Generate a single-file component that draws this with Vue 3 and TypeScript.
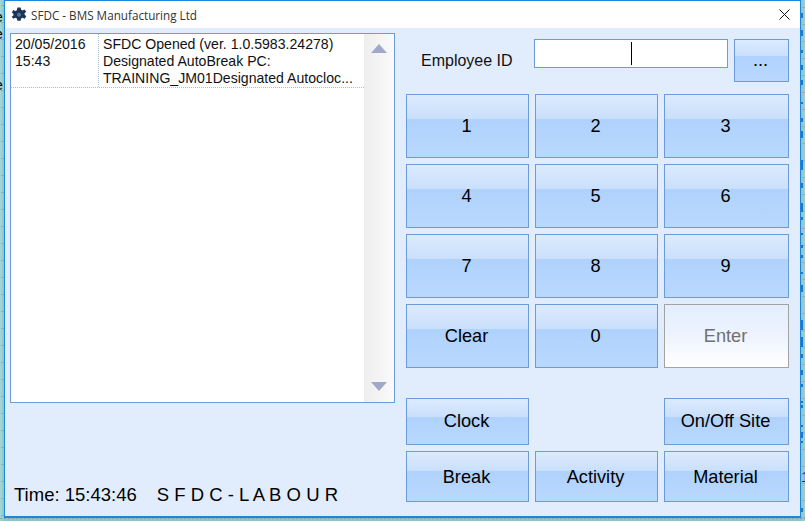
<script setup lang="ts">
interface Mark { top: number; height: number; strong?: boolean }
const marks: Mark[] = [
  [13,5],[30,6],[50,3],[65,5],[80,5],[102,2],[118,4],[131,7],[160,10],[183,5],[203,9],[217,3],[233,2],[245,3],[255,3],
  [272,2],[285,7],[320,10],[337,10],[354,4],[370,5],[384,3],[401,2],[405,3],[425,2],[432,6],[441,2],[508,4],
].map(([top, height]) => ({ top, height }))
const keys = ['1', '2', '3', '4', '5', '6', '7', '8', '9', 'Clear', '0']
</script>

<template>
  <div class="desktop">
    <span class="peek p1">e</span>
    <span class="peek p2">e</span>
    <span class="peek p3">e</span>
    <i v-for="m in marks" :key="m.top" class="mark" :style="{ top: m.top + 'px', height: m.height + 'px' }"></i>
    <span class="peek-one">1</span>

    <div class="window">
      <header class="titlebar">
        <svg class="logo" width="16" height="16" viewBox="0 0 16 16">
          <path fill="#1b3558" d="M6.4 0.6h3.2l.5 2.1 1.5.7 2-1 1.6 2.4-1.6 1.4v1.6l1.7 1.4-1.7 2.5-2-.9-1.5.7-.5 2.2H6.4l-.5-2.2-1.5-.7-2 .9L.7 9.8l1.7-1.4V6.8L.8 5.4l1.6-2.4 2 1 1.5-.7z" />
          <circle cx="8" cy="7.7" r="2" fill="#5a7596" />
        </svg>
        <span class="title">SFDC - BMS Manufacturing Ltd</span>
        <svg class="close" width="11" height="11" viewBox="0 0 11 11">
          <path d="M0.5 0.5l10 10M10.5 0.5l-10 10" stroke="#111" stroke-width="1" fill="none" />
        </svg>
      </header>

      <div class="body">
        <section class="left">
          <div class="log">
            <div class="entries">
              <div class="entry">
                <div class="when">20/05/2016<br />15:43</div>
                <div class="what">SFDC Opened (ver. 1.0.5983.24278)<br />Designated AutoBreak PC:<br />TRAINING_JM01Designated Autocloc...</div>
              </div>
            </div>
            <div class="scroll">
              <span class="arrow up"></span>
              <span class="arrow down"></span>
            </div>
          </div>
          <div class="status">
            <span>Time: 15:43:46</span>
            <span class="module">S F D C - L A B O U R</span>
          </div>
        </section>

        <section class="right">
          <div class="idrow">
            <label class="idlabel">Employee ID</label>
            <div class="idinput"><span class="caret"></span></div>
            <button class="btn more">...</button>
          </div>

          <div class="keypad">
            <button v-for="k in keys" :key="k" class="btn">{{ k }}</button>
            <button class="btn enter">Enter</button>
          </div>

          <div class="actions">
            <button class="btn">Clock</button>
            <span></span>
            <button class="btn">On/Off Site</button>
            <button class="btn">Break</button>
            <button class="btn">Activity</button>
            <button class="btn">Material</button>
          </div>
        </section>
      </div>
    </div>
  </div>
</template>

<style>
html, body { margin: 0; padding: 0; overflow: hidden; }
</style>

<style scoped>
.desktop {
  position: relative;
  width: 805px;
  height: 521px;
  box-sizing: border-box;
  padding: 0 4px 3px 4px;
  overflow: hidden;
  background-color: #93cac9;
  background-image:
    repeating-linear-gradient(180deg, #9aa9b8 0 1px, transparent 1px 17px),
    repeating-linear-gradient(180deg, #9aa9b8 0 1px, transparent 1px 17px),
    repeating-linear-gradient(90deg, #8f9fb4 0 2px, transparent 2px 4px),
    linear-gradient(90deg, #a6d8d8 0, #8fc6c5 4px, #8fc6c5 801px, #9ccfce 805px);
  background-size: 3px 100%, 3px 100%, 100% 1px, 100% 100%;
  background-position: 1px 5px, 802px 7px, 0 518px, 0 0;
  background-repeat: no-repeat;
  font-family: "Liberation Sans", Arial, sans-serif;
  color: #000;
}
.peek { position: absolute; left: -5px; font-size: 14px; line-height: 16px; }
.p1 { top: 9px; }
.p2 { top: 26px; }
.p3 { top: 77px; }
.mark { position: absolute; left: 801px; width: 2px; background: #1a78cf; }
.peek-one { position: absolute; left: 801px; top: 469px; font-size: 15px; line-height: 15px; color: #1414d8; width: 4px; overflow: hidden; }

.window {
  position: relative;
  box-sizing: border-box;
  height: 518px;
  border: 1px solid #1a86dc;
  border-width: 1px 1px 2px 1px;
  background: #e1edfd;
  display: flex;
  flex-direction: column;
}
.titlebar {
  height: 27px;
  flex: none;
  background: #fff;
  display: flex;
  align-items: center;
  padding: 0 10px 0 6px;
}
.logo { flex: none; }
.title {
  margin-left: 4px;
  font-family: "Open Sans", "Noto Sans", sans-serif;
  font-size: 11.7px;
  color: #333;
  white-space: nowrap;
}
.close { margin-left: auto; }

.body {
  flex: 1;
  display: flex;
  padding: 5px 0 0 5px;
  gap: 11px;
}
.left {
  width: 385px;
  flex: none;
  display: flex;
  flex-direction: column;
}
.log {
  box-sizing: border-box;
  height: 370px;
  background: #fff;
  border: 1px solid #6b9bd8;
  display: flex;
}
.entries { flex: 1; }
.entry {
  display: flex;
  height: 54px;
  box-sizing: border-box;
  border-bottom: 1px dotted #a9bdd3;
  font-size: 14.1px;
  line-height: 17px;
}
.when {
  box-sizing: border-box;
  width: 88px;
  padding: 2px 0 0 4px;
  border-right: 1px dotted #a9bdd3;
  color: #111;
}
.what { padding: 2px 0 0 4px; white-space: nowrap; color: #111; }
.scroll {
  width: 30px;
  flex: none;
  background: linear-gradient(90deg, #eeeeee, #fafafa);
  display: flex;
  flex-direction: column;
  justify-content: space-between;
  align-items: center;
  padding: 10px 0 11px;
}
.arrow { width: 0; height: 0; border-left: 8.5px solid transparent; border-right: 8.5px solid transparent; }
.arrow.up { border-bottom: 9px solid #a0a9cc; }
.arrow.down { border-top: 9px solid #a0a9cc; }

.status {
  margin-top: auto;
  margin-bottom: 10px;
  padding-left: 4px;
  font-size: 18.5px;
  line-height: 22px;
  white-space: nowrap;
  display: flex;
  gap: 20px;
}

.right {
  width: 383px;
  flex: none;
  padding-top: 6px;
  display: flex;
  flex-direction: column;
}
.idrow {
  display: flex;
  align-items: flex-start;
  height: 43px;
  margin-bottom: 12px;
}
.idlabel {
  width: 128px;
  padding-left: 15px;
  box-sizing: border-box;
  font-size: 16px;
  line-height: 43px;
  color: #111;
}
.idinput {
  box-sizing: border-box;
  width: 194px;
  height: 29px;
  background: #fff;
  border: 1px solid #6b9bd8;
  display: flex;
  align-items: center;
  justify-content: center;
}
.caret { width: 1px; height: 23px; background: #000; }

.btn {
  box-sizing: border-box;
  border: 1px solid #6b9bd8;
  border-radius: 0;
  padding: 0 2px 0 0;
  margin: 0;
  font-family: "Liberation Sans", Arial, sans-serif;
  font-size: 18.2px;
  color: #000;
  background: linear-gradient(180deg, #dcebfe 0, #c9dffb 39%, #afd2fd 39%, #b9d8fd 100%);
}
.more { width: 55px; height: 43px; margin-left: 6px; }
.keypad {
  display: grid;
  grid-template-columns: 123px 123px 125px;
  grid-auto-rows: 64px;
  gap: 6px;
}
.enter {
  border-color: #a3a3a3;
  color: #707070;
  background: linear-gradient(180deg, #e3eefe 0, #ecf3fe 45%, #ffffff 100%);
}
.actions {
  margin-top: 30px;
  display: grid;
  grid-template-columns: 123px 123px 125px;
  grid-template-rows: 47px 51px;
  gap: 6px;
}
.actions .btn:nth-child(n+4) { padding-top: 1px; }
</style>
